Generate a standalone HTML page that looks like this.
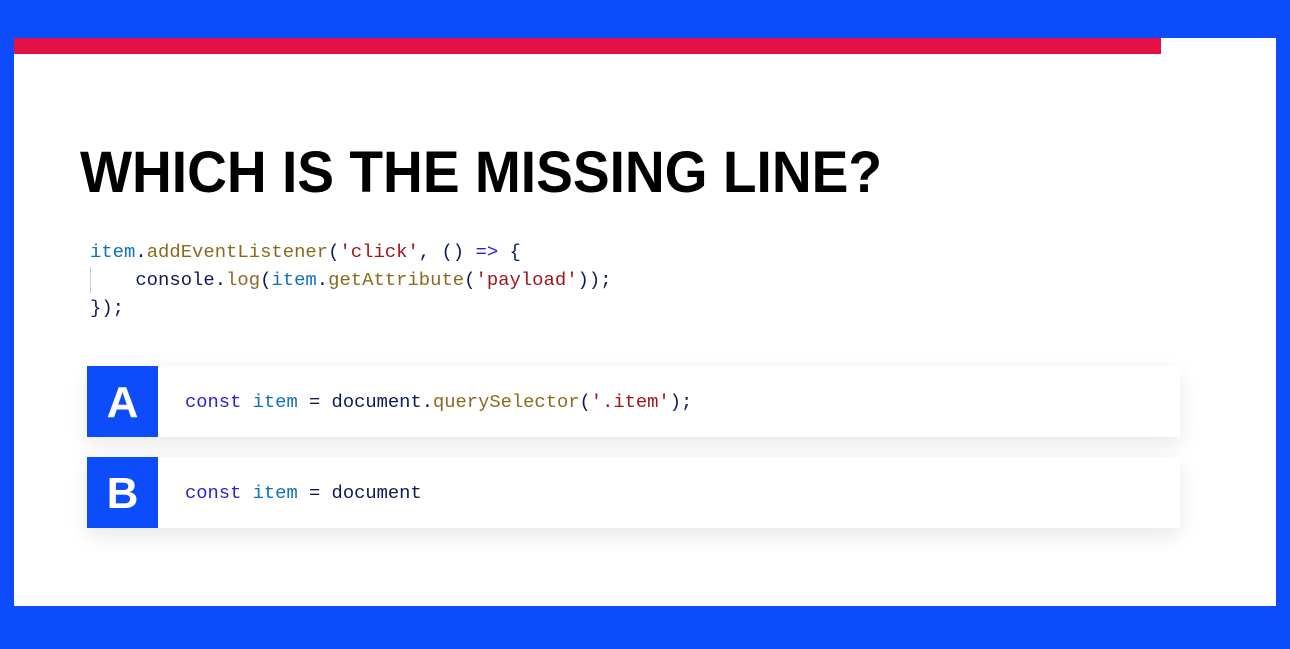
<!DOCTYPE html>
<html><head><style>
body{margin:0;width:1290px;height:649px;background:#0c4cfb;position:relative;overflow:hidden;font-family:"Liberation Sans",sans-serif}
.card{position:absolute;left:14px;top:38px;width:1262px;height:568px;background:#fff}
.red{position:absolute;left:14px;top:38px;width:1147px;height:16px;background:#e31145}
h1{position:absolute;left:80px;top:138px;margin:0;font-size:58px;font-weight:900;letter-spacing:0px;color:#000;line-height:70px;transform:scaleX(0.95);transform-origin:left}
.code{position:absolute;left:90px;top:238px;font-family:"Liberation Mono",monospace;font-size:18.9px;line-height:28px;color:#0e1a55;white-space:pre}
.bar{position:absolute;left:90px;top:267px;width:1px;height:26px;background:#ccc}
.opt{position:absolute;left:87px;width:1093px;height:71px;background:#fff;box-shadow:0 8px 20px rgba(0,0,0,0.09)}
.let{position:absolute;left:0;top:0;width:71px;height:71px;background:#0c4cfb;color:#fff;font-weight:900;font-size:44px;text-align:center;line-height:73px}
.t{position:absolute;left:98px;top:23px;font-family:"Liberation Mono",monospace;font-size:18.8px;line-height:26px;white-space:pre;color:#0e1a55}
.kw{color:#2a1fd6}.v{color:#0d72c0}.s{color:#a3151a}.f{color:#8a6a20}
</style></head><body>
<div class="card"></div><div class="red"></div>
<h1>WHICH IS THE MISSING LINE?</h1>
<div class="bar"></div>
<div class="code"><span class="v">item</span>.<span class="f">addEventListener</span>(<span class="s">'click'</span>, () <span class="kw">=&gt;</span> {
    console.<span class="f">log</span>(<span class="v">item</span>.<span class="f">getAttribute</span>(<span class="s">'payload'</span>));
});</div>
<div class="opt" style="top:366px"><div class="let">A</div><div class="t"><span class="kw">const</span> <span class="v">item</span> = document.<span class="f">querySelector</span>(<span class="s">'.item'</span>);</div></div>
<div class="opt" style="top:457px"><div class="let">B</div><div class="t"><span class="kw">const</span> <span class="v">item</span> = document</div></div>
</body></html>
